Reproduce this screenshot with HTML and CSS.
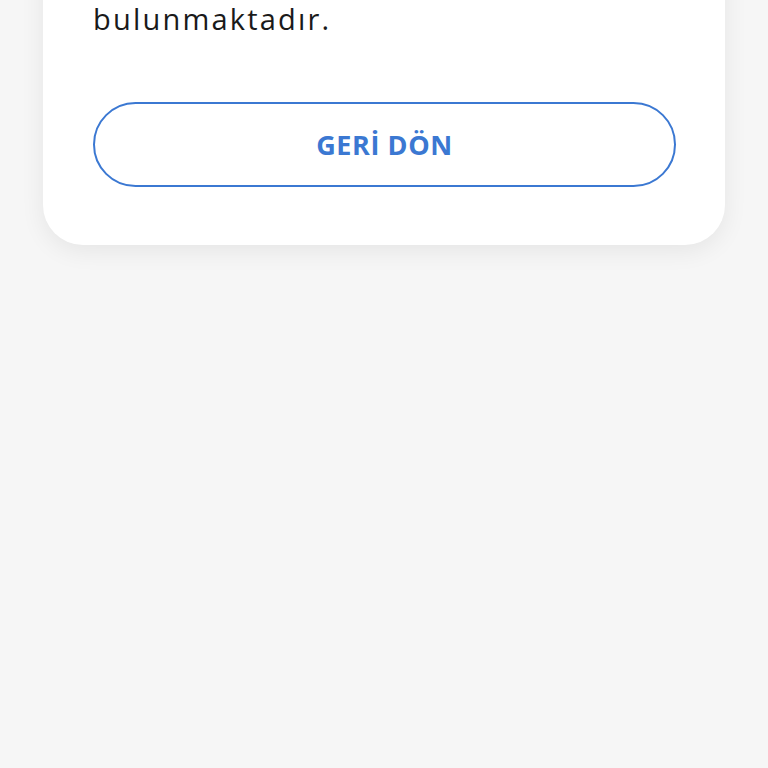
FILE: index.html
```html
<!DOCTYPE html>
<html lang="tr">
<head>
  <meta charset="UTF-8" />
  <title>Bilgi</title>
  <link rel="stylesheet" href="styles.css">
</head>
<body>
  <div class="card">
    <p class="message">bulunmaktadır.</p>
    <button class="back-btn">GERİ DÖN</button>
  </div>
</body>
</html>
```
FILE: styles.css
```css
html, body {
  margin: 0;
  padding: 0;
  background: #f6f6f6;
  font-family: "Open Sans", Arial, sans-serif;
  min-height: 100vh;
}

.card {
  margin: -40px 43px 0;
  background: #fff;
  border-radius: 0 0 40px 40px;
  padding: 0 49px 58px 50px;
  box-shadow: 0 6px 24px rgba(0,0,0,0.07);
}

.message {
  margin: 0;
  padding-top: 39px;
  font-size: 29px;
  line-height: 40px;
  color: #1a1a1a;
  letter-spacing: 2.2px;
}

.back-btn {
  display: block;
  width: 100%;
  height: 85px;
  margin-top: 63px;
  background: #fff;
  border: 2px solid #3b78d2;
  border-radius: 43px;
  color: #3b78d2;
  font-family: "Open Sans", Arial, sans-serif;
  font-weight: 700;
  font-size: 27px;
  letter-spacing: 0.6px;
  cursor: pointer;
}
```
